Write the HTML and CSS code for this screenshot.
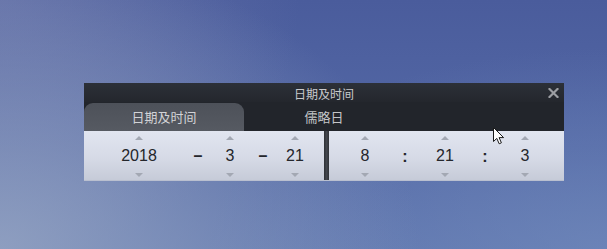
FILE: index.html
```html
<!DOCTYPE html>
<html lang="zh">
<head>
<meta charset="utf-8">
<link rel="stylesheet" href="styles.css">
</head>
<body>
<div class="desk">
  <div class="win">
    <div class="titlebar">
      <span class="title">日期及时间</span>
      <svg class="close" width="11" height="10" viewBox="0 0 11 10"><path d="M1.5 1 L9.5 9 M9.5 1 L1.5 9" stroke="#9c9ea3" stroke-width="2.2" stroke-linecap="square"/></svg>
    </div>
    <div class="tabs">
      <div class="tab active">日期及时间</div>
      <div class="tab">儒略日</div>
    </div>
    <div class="content">
      <div class="panel date">
        <div class="field"><span class="up"></span><span class="val">2018</span><span class="down"></span></div>
        <div class="sep">–</div>
        <div class="field"><span class="up"></span><span class="val">3</span><span class="down"></span></div>
        <div class="sep">–</div>
        <div class="field"><span class="up"></span><span class="val">21</span><span class="down"></span></div>
      </div>
      <div class="divider"></div>
      <div class="panel time">
        <div class="field"><span class="up"></span><span class="val">8</span><span class="down"></span></div>
        <div class="sep colon">:</div>
        <div class="field"><span class="up"></span><span class="val">21</span><span class="down"></span></div>
        <div class="sep colon">:</div>
        <div class="field"><span class="up"></span><span class="val">3</span><span class="down"></span></div>
      </div>
    </div>
    <svg class="cursor" width="12" height="18" viewBox="0 0 12 18"><path d="M0.5 0.5 L0.5 14.5 L3.8 11.4 L6.2 16.8 L8.4 15.8 L6.1 10.6 L10.6 10.6 Z" fill="#ffffff" stroke="#1a1a1a" stroke-width="1" stroke-linejoin="round"/></svg>
  </div>
</div>
</body>
</html>
```
FILE: styles.css
```css
html, body {
  margin: 0;
  padding: 0;
}
body {
  width: 607px;
  height: 249px;
  overflow: hidden;
  font-family: "Liberation Sans", "Noto Sans CJK SC", sans-serif;
}
.desk {
  width: 607px;
  height: 249px;
  box-sizing: border-box;
  padding: 83px 0 0 84px;
  background:
    radial-gradient(ellipse 420px 300px at 0% 100%, rgba(150,165,195,0.85), rgba(150,165,195,0) 100%),
    radial-gradient(ellipse 300px 260px at 0% 0%, rgba(115,125,175,0.6), rgba(115,125,175,0) 100%),
    radial-gradient(ellipse 400px 200px at 100% 100%, rgba(115,140,190,0.6), rgba(115,140,190,0) 100%),
    linear-gradient(180deg, #4a5c9c 0%, #5469a6 60%, #5f76ae 100%);
}
.win {
  position: relative;
  width: 480px;
  background: #22252b;
}
.titlebar {
  position: relative;
  height: 19px;
  display: flex;
  align-items: center;
  justify-content: center;
  background: linear-gradient(180deg, #2c3038 0%, #24272d 100%);
}
.title {
  color: #c9cacd;
  font-size: 12px;
  line-height: 14px;
  font-family: "Noto Sans CJK SC", sans-serif;
  padding-top: 3px;
}
.close {
  position: absolute;
  right: 5px;
  top: 5px;
}
.tabs {
  height: 29px;
  display: flex;
  align-items: flex-end;
  background: #22252b;
}
.tab {
  width: 160px;
  height: 28px;
  display: flex;
  align-items: center;
  justify-content: center;
  font-family: "Noto Sans CJK SC", sans-serif;
  font-size: 13px;
  color: #c4c5c8;
  padding-bottom: 2px;
  box-sizing: border-box;
}
.tab.active {
  background: linear-gradient(180deg, #4d5159 0%, #565a62 100%);
  border-radius: 9px 9px 0 0;
  color: #d2d3d6;
}
.content {
  height: 50px;
  display: flex;
  background: linear-gradient(180deg, #e1e5f0 0%, #d6dae6 55%, #c6cbd8 100%);
  border-bottom: 1px solid #b9bfcf;
  box-sizing: border-box;
}
.panel {
  display: grid;
  height: 100%;
}
.panel.date {
  width: 240px;
  grid-template-columns: 110px 8px 56px 10px 54px;
}
.panel.time {
  width: 235px;
  grid-template-columns: 72px 8px 72px 8px 72px;
}
.divider {
  width: 5px;
  background: linear-gradient(90deg, #2d3036 0%, #43464d 50%, #2f3238 100%);
}
.field {
  display: flex;
  flex-direction: column;
  align-items: center;
}
.up {
  margin-top: 5px;
  width: 0;
  height: 0;
  border-left: 4px solid transparent;
  border-right: 4px solid transparent;
  border-bottom: 4px solid #a3a8b3;
}
.down {
  margin-top: 8px;
  width: 0;
  height: 0;
  border-left: 4px solid transparent;
  border-right: 4px solid transparent;
  border-top: 4px solid #a3a8b3;
}
.val {
  margin-top: 7px;
  font-size: 16px;
  line-height: 18px;
  height: 18px;
  color: #24262b;
}
.sep {
  display: flex;
  justify-content: center;
  padding-top: 16px;
  font-size: 16px;
  line-height: 18px;
  font-weight: bold;
  color: #24262b;
}
.sep.colon {
  padding-top: 17px;
}
.cursor {
  position: absolute;
  left: 409px;
  top: 44px;
}
```
